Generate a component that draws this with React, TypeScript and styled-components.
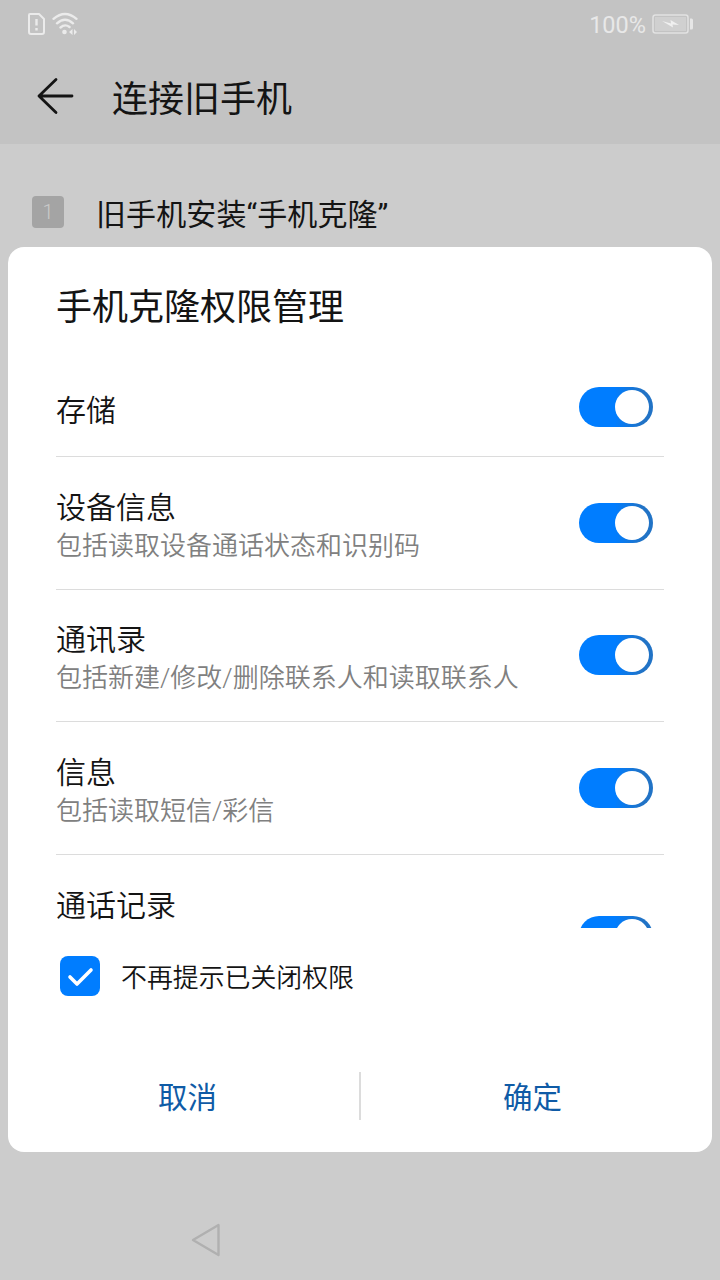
import React from "react";
import styled, { createGlobalStyle } from "styled-components";

const GlobalStyle = createGlobalStyle`
  * { box-sizing: border-box; }
  body {
    margin: 0;
    background: #cccccc;
    color: #141414;
    font-family: Roboto, "Noto Sans CJK SC", sans-serif;
  }
  button { font: inherit; border: 0; background: none; padding: 0; }
`;

const Screen = styled.div`
  position: relative;
  display: flex;
  flex-direction: column;
  width: 720px;
  height: 1280px;
  overflow: hidden;
  background: #cccccc;
`;

const StatusBar = styled.div`
  display: flex;
  align-items: center;
  justify-content: space-between;
  height: 48px;
  padding: 0 26px 0 27px;
  background: #c3c3c3;
`;

const StatusGroup = styled.div<{ $gap: number }>`
  display: flex;
  align-items: center;
  gap: ${(p) => p.$gap}px;
  height: 48px;
`;

const BatteryLevel = styled.span`
  color: #e8e8e8;
  font-size: 23.5px;
  line-height: 48px;
  padding-top: 2px;
`;

const AppBar = styled.header`
  display: flex;
  align-items: center;
  gap: 38.5px;
  height: 96px;
  padding-left: 35.5px;
  background: #c3c3c3;
`;

const PageTitle = styled.h1`
  margin: 0;
  font-size: 36px;
  font-weight: 400;
  line-height: 52px;
  padding-top: 8px;
`;

const Step = styled.div`
  display: flex;
  align-items: flex-start;
  gap: 32px;
  padding: 51px 32px 0;
`;

const StepNumber = styled.span`
  width: 32px;
  height: 32px;
  margin-top: 1px;
  border-radius: 4px;
  background: #a4a4a4;
  color: #cacaca;
  font-size: 20px;
  font-weight: 300;
  line-height: 33px;
  text-align: center;
`;

const StepText = styled.span`
  font-size: 30px;
  line-height: 40px;
  letter-spacing: 0.1px;
`;

const NavBar = styled.nav`
  display: flex;
  align-items: center;
  height: 80px;
  margin-top: auto;
  padding-left: 191px;
`;

const Dialog = styled.section`
  position: absolute;
  top: 247px;
  left: 8px;
  display: flex;
  flex-direction: column;
  width: 704px;
  height: 905px;
  border-radius: 16px;
  background: #ffffff;
`;

const DialogTitle = styled.h2`
  margin: 0;
  padding: 35px 48px 0;
  height: 113px;
  font-size: 36px;
  font-weight: 400;
  line-height: 52px;
`;

const PermissionList = styled.div`
  height: 568px;
  margin: 0 48px;
  overflow: hidden;
`;

const PermissionRow = styled.div<{ $height: number }>`
  display: flex;
  align-items: center;
  justify-content: space-between;
  height: ${(p) => p.$height}px;
  padding-right: 11px;
  border-bottom: 1px solid #dcdcdc;
`;

const PermissionText = styled.div`
  display: flex;
  flex-direction: column;
  padding-top: 6px;
`;

const PermissionName = styled.span`
  font-size: 30px;
  font-weight: 350;
  line-height: 40px;
`;

const PermissionHint = styled.span<{ $lines: number }>`
  min-height: ${(p) => p.$lines * 36}px;
  color: #808080;
  font-size: 26px;
  font-weight: 350;
  line-height: 36px;
`;

const Track = styled.span<{ $lift: number }>`
  display: flex;
  justify-content: flex-end;
  width: 74px;
  height: 40px;
  margin-bottom: ${(p) => p.$lift}px;
  padding: 3px 4px 3px 3px;
  border-radius: 20px;
  background: linear-gradient(90deg, #007dff 48%, #2173c6 85%);
`;

const Knob = styled.span`
  width: 34px;
  height: 34px;
  border-radius: 50%;
  background: #ffffff;
`;

const RememberRow = styled.label`
  display: flex;
  align-items: center;
  gap: 21px;
  height: 96px;
  padding-left: 52px;
`;

const CheckBox = styled.span`
  display: flex;
  width: 40px;
  height: 40px;
  border-radius: 8px;
  background: #007dff;
`;

const RememberText = styled.span`
  font-size: 25.9px;
  font-weight: 350;
  line-height: 38px;
  padding-top: 4px;
`;

const Actions = styled.div`
  display: flex;
  align-items: center;
  height: 48px;
  margin: 48px 8px 0;
`;

const ActionButton = styled.button`
  flex: 1;
  color: #0f5ba6;
  font-size: 29.5px;
  line-height: 48px;
  padding-top: 4px;
`;

const Separator = styled.span`
  width: 2px;
  height: 48px;
  background: #dcdcdc;
`;

const Toggle = ({ lift = 0 }: { lift?: number }) => (
  <Track role="switch" aria-checked="true" $lift={lift}>
    <Knob />
  </Track>
);

const permissions: { name: string; hint?: string; height: number; lines?: number; lift?: number }[] = [
  { name: "存储", height: 97, lift: 2 },
  { name: "设备信息", hint: "包括读取设备通话状态和识别码", height: 132.5 },
  { name: "通讯录", hint: "包括新建/修改/删除联系人和读取联系人", height: 132.5 },
  { name: "信息", hint: "包括读取短信/彩信", height: 133 },
  { name: "通话记录", hint: "", height: 163, lines: 1.85 },
];

export default function App() {
  return (
    <>
      <GlobalStyle />
      <Screen>
        <StatusBar>
          <StatusGroup $gap={6}>
            <svg width="19" height="24" viewBox="0 0 19 24" fill="none" stroke="#ebebeb" strokeWidth="2">
              <path d="M3 2H12L17 7V20Q17 22 15 22H4Q2 22 2 20V3Q2 2 3 2Z" strokeLinejoin="round" />
              <path d="M9.5 7V13.5M9.5 16V18.5" strokeWidth="2.4" />
            </svg>
            <svg width="27" height="24" viewBox="0 0 27 24" fill="none" stroke="#ebebeb" strokeWidth="2.4" strokeLinecap="round">
              <path d="M1.5 6.8Q13 -3 24.5 6.8M5 11.3Q13 4 21 11.3M8.5 15.5Q13 11.5 17.5 15" />
              <circle cx="12.5" cy="20" r="2.3" fill="#ebebeb" stroke="none" />
              <path d="M20.5 17V23L17 20ZM22 17V23L25 20Z" fill="#ebebeb" stroke="none" />
            </svg>
          </StatusGroup>
          <StatusGroup $gap={6}>
            <BatteryLevel>100%</BatteryLevel>
            <svg width="42" height="20" viewBox="0 0 42 20" fill="none">
              <rect x="1" y="1" width="35" height="18" rx="2.5" stroke="#e2e2e2" strokeWidth="1.5" />
              <rect x="3" y="3" width="31" height="14" fill="#d0d0d0" />
              <path d="M38 4.5H39.5Q41 4.5 41 6V14Q41 15.5 39.5 15.5H38Z" fill="#e6e6e6" />
              <path d="M10 7L19 9.5L18.5 6L27 11L20.5 10.5L21 13.5Z" fill="#f0f0f0" />
            </svg>
          </StatusGroup>
        </StatusBar>
        <AppBar>
          <svg width="38" height="38" viewBox="0 0 38 38" fill="none" stroke="#141414" strokeWidth="2.8" strokeLinecap="round" strokeLinejoin="round">
            <path d="M20 2.5L3 19L20 35.5M3 19H36" />
          </svg>
          <PageTitle>连接旧手机</PageTitle>
        </AppBar>
        <Step>
          <StepNumber>1</StepNumber>
          <StepText>旧手机安装“手机克隆”</StepText>
        </Step>
        <NavBar>
          <svg width="30" height="34" viewBox="0 0 30 34" fill="none" stroke="#b0b0b0" strokeWidth="2.4" strokeLinejoin="round">
            <path d="M27.5 2V32L2 17Z" />
          </svg>
        </NavBar>
        <Dialog role="dialog">
          <DialogTitle>手机克隆权限管理</DialogTitle>
          <PermissionList>
            {permissions.map((p) => (
              <PermissionRow key={p.name} $height={p.height}>
                <PermissionText>
                  <PermissionName>{p.name}</PermissionName>
                  {p.hint !== undefined && <PermissionHint $lines={p.lines ?? 1}>{p.hint}</PermissionHint>}
                </PermissionText>
                <Toggle lift={p.lift} />
              </PermissionRow>
            ))}
          </PermissionList>
          <RememberRow>
            <CheckBox>
              <svg width="40" height="40" viewBox="0 0 40 40" fill="none" stroke="#ffffff" strokeWidth="3.6" strokeLinecap="round" strokeLinejoin="round">
                <path d="M10 21L17 28L31 14" />
              </svg>
            </CheckBox>
            <RememberText>不再提示已关闭权限</RememberText>
          </RememberRow>
          <Actions>
            <ActionButton>取消</ActionButton>
            <Separator />
            <ActionButton>确定</ActionButton>
          </Actions>
        </Dialog>
      </Screen>
    </>
  );
}
